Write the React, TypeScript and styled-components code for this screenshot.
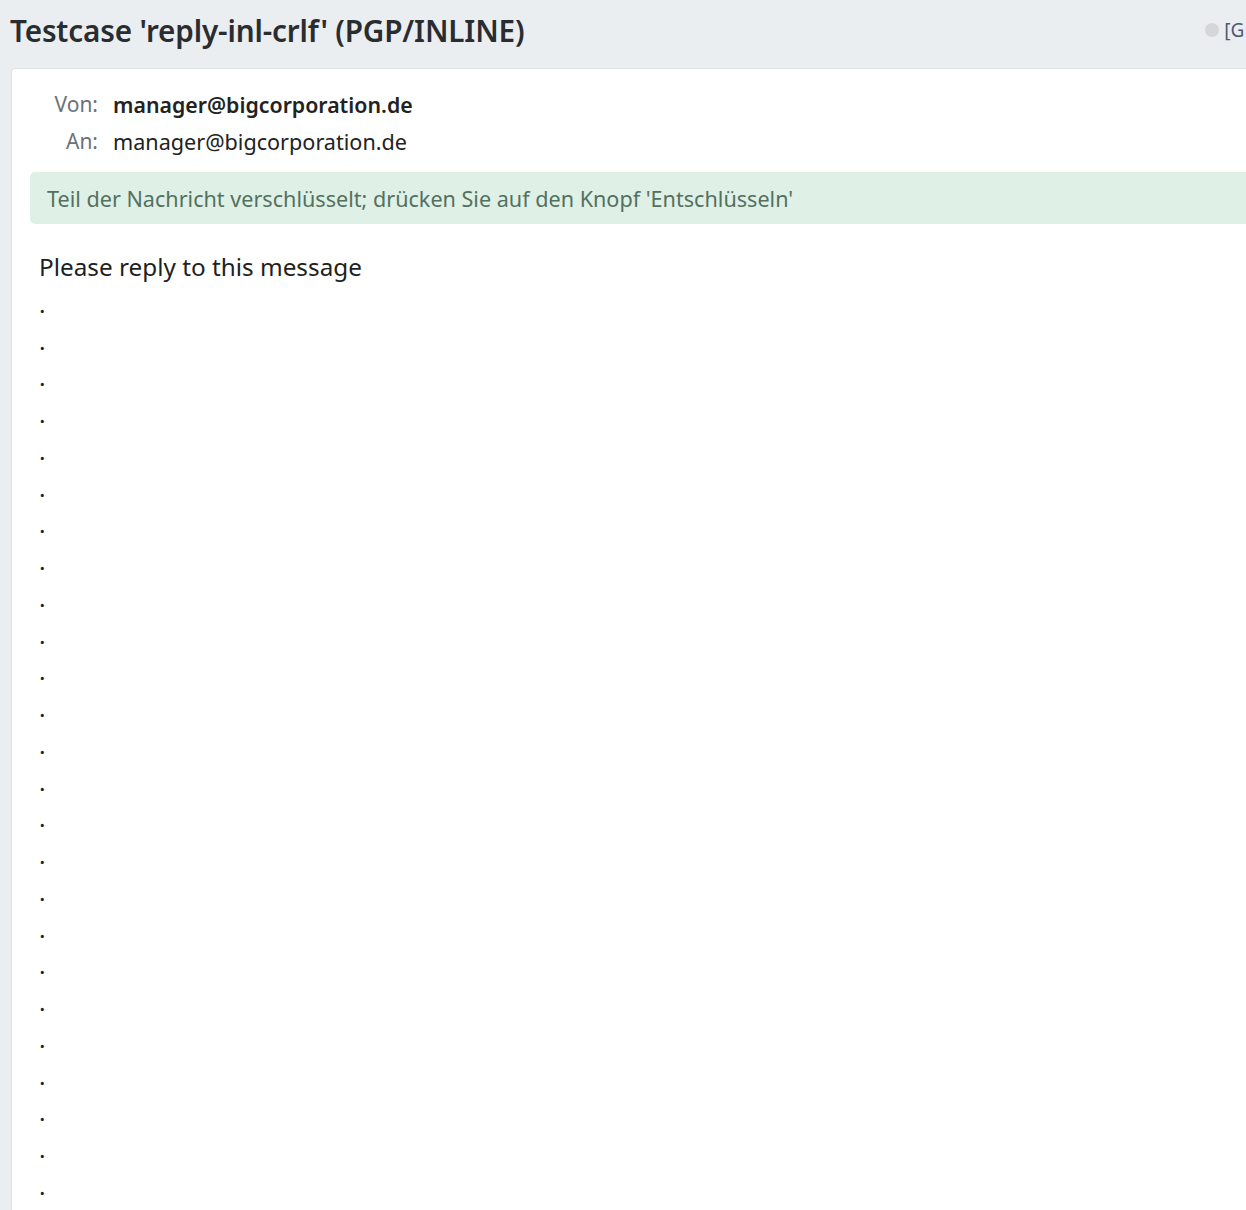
import React from "react";
import styled, { createGlobalStyle } from "styled-components";

const GlobalStyle = createGlobalStyle`
  html, body {
    margin: 0;
    padding: 0;
    background: #ebeef1;
    font-family: "Noto Sans", "Open Sans", sans-serif;
    overflow: hidden;
  }
`;

const Page = styled.div`
  width: 1246px;
  height: 1210px;
  overflow: hidden;
  display: flex;
  flex-direction: column;
`;

const TopBar = styled.div`
  display: flex;
  align-items: center;
  justify-content: space-between;
  height: 68px;
  padding: 0 0 8px 10px;
  box-sizing: border-box;
  white-space: nowrap;
`;

const Title = styled.h1`
  margin: 0;
  font-size: 29.7px;
  font-weight: 600;
  color: #2a2d30;
  letter-spacing: -0.15px;
`;

const Status = styled.div`
  display: flex;
  align-items: center;
  gap: 5px;
  margin-right: -30px;
  font-size: 19px;
  color: #4b5a72;
`;

const StatusDot = styled.span`
  width: 14px;
  height: 14px;
  border-radius: 50%;
  background: #d4d6d8;
`;

const Card = styled.div`
  flex: 1;
  margin-left: 11px;
  margin-right: -20px;
  background: #fff;
  border: 1px solid #dfe3e7;
  border-right: none;
  border-bottom: none;
  border-top-left-radius: 4px;
  padding: 17px 0 0 18px;
`;

const Headers = styled.div`
  display: grid;
  grid-template-columns: 68px auto;
  column-gap: 15px;
  margin-bottom: 12px;
`;

const Label = styled.div`
  text-align: right;
  font-size: 21px;
  line-height: 37px;
  color: #6c7278;
  white-space: nowrap;
`;

const Value = styled.div<{ $strong?: boolean }>`
  font-size: ${(p) => (p.$strong ? "21.3px" : "21.6px")};
  line-height: 37px;
  color: #222;
  font-weight: ${(p) => (p.$strong ? 600 : 400)};
`;

const Notice = styled.div`
  background: #dff0e7;
  color: #54705f;
  font-size: 21.6px;
  height: 52px;
  display: flex;
  align-items: center;
  padding-left: 17px;
  border-top-left-radius: 5px;
  border-bottom-left-radius: 5px;
  white-space: nowrap;
`;

const Body = styled.pre`
  margin: 25px 0 0 9px;
  font-family: "Noto Sans", "Open Sans", sans-serif;
  font-size: 24.3px;
  line-height: 36.75px;
  color: #1e1f21;
  white-space: pre-wrap;
`;

const bodyText = ["Please reply to this message", ...Array(25).fill(".")].join("\n");

export default function App() {
  return (
    <Page>
      <GlobalStyle />
      <TopBar>
        <Title>Testcase 'reply-inl-crlf' (PGP/INLINE)</Title>
        <Status>
          <StatusDot />
          <span>[GPG]</span>
        </Status>
      </TopBar>
      <Card>
        <Headers>
          <Label>Von:</Label>
          <Value $strong>manager@bigcorporation.de</Value>
          <Label>An:</Label>
          <Value>manager@bigcorporation.de</Value>
        </Headers>
        <Notice>Teil der Nachricht verschlüsselt; drücken Sie auf den Knopf 'Entschlüsseln'</Notice>
        <Body>{bodyText}</Body>
      </Card>
    </Page>
  );
}
